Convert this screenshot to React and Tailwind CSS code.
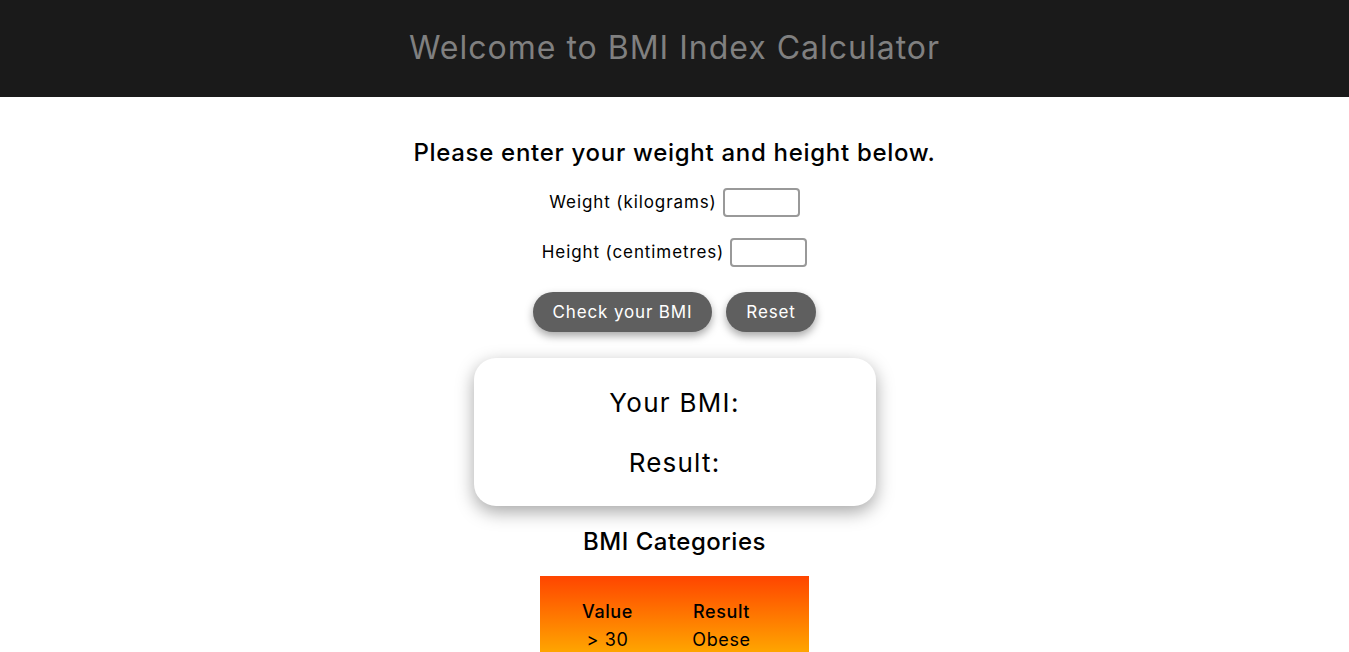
import React from "react";

const categories = [
  { value: "> 30", result: "Obese" },
  { value: "25 - 30", result: "Overweight" },
  { value: "18.5 - 25", result: "Normal" },
  { value: "< 18.5", result: "Underweight" },
];

export default function App() {
  return (
    <div className="min-h-screen bg-white font-['Inter','Liberation_Sans',sans-serif] text-black">
      {/* Header */}
      <header className="h-[97px] bg-[#1a1a1a] flex items-center justify-center">
        <h1 className="text-[32px] leading-[40px] pb-[2px] font-normal tracking-[1px] text-[#808080]">
          Welcome to BMI Index Calculator
        </h1>
      </header>

      <main className="flex flex-col items-center">
        <h2 className="mt-[41px] text-[24px] leading-[30px] font-medium tracking-[0.7px]">
          Please enter your weight and height below.
        </h2>

        <div className="mt-[20px] flex items-center gap-[6px]">
          <label className="text-[17px] tracking-[0.9px]">Weight (kilograms)</label>
          <input className="w-[77px] h-[29px] border-2 border-[#999] rounded-[4px] px-1 outline-none" />
        </div>

        <div className="mt-[21px] flex items-center gap-[6px]">
          <label className="text-[17px] tracking-[0.9px]">Height (centimetres)</label>
          <input className="w-[77px] h-[29px] border-2 border-[#999] rounded-[4px] px-1 outline-none" />
        </div>

        <div className="mt-[25px] flex gap-[14px]">
          <button className="h-[40px] w-[179px] pt-[2px] rounded-full bg-[#5f5f5f] text-white text-[17px] tracking-[0.85px] shadow-[0_4px_8px_rgba(0,0,0,0.35)]">
            Check your BMI
          </button>
          <button className="h-[40px] w-[90px] pt-[2px] rounded-full bg-[#5f5f5f] text-white text-[17px] tracking-[0.85px] shadow-[0_4px_8px_rgba(0,0,0,0.35)]">
            Reset
          </button>
        </div>

        {/* Result card */}
        <div className="mt-[26px] w-[402px] h-[148px] rounded-[22px] bg-white shadow-[0_6px_18px_rgba(0,0,0,0.35)] flex flex-col items-center justify-center gap-[28px]">
          <p className="text-[26px] leading-[32px] pt-[2px] tracking-[1.3px]">Your BMI:</p>
          <p className="text-[26px] leading-[32px] tracking-[1.2px]">Result:</p>
        </div>

        <h2 className="mt-[20px] text-[24px] leading-[30px] pt-[1px] font-medium tracking-[0.5px]">
          BMI Categories
        </h2>

        {/* Categories table */}
        <div className="mt-[19px] w-[269px] pl-[20px] bg-[linear-gradient(to_bottom,#ff4500_0px,#ffa500_76px,#ffe000_190px)]">
          <table className="w-[228px] table-fixed">
            <thead>
              <tr>
                <th className="w-[95px] pt-[23px] text-[18px] leading-[26px] font-medium tracking-[0.6px]">Value</th>
                <th className="w-[133px] pt-[23px] text-[18px] leading-[26px] font-medium tracking-[0.6px]">Result</th>
              </tr>
            </thead>
            <tbody>
              {categories.map((c) => (
                <tr key={c.value}>
                  <td className="text-center text-[18px] leading-[29px] tracking-[0.6px]">{c.value}</td>
                  <td className="text-center text-[18px] leading-[29px] tracking-[0.6px]">{c.result}</td>
                </tr>
              ))}
            </tbody>
          </table>
          <div className="h-[20px]" />
        </div>
      </main>
    </div>
  );
}
